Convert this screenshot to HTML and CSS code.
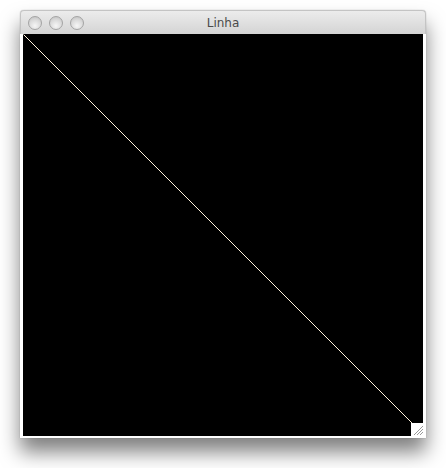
FILE: index.html
```html
<!DOCTYPE html>
<html>
<head>
<meta charset="utf-8">
<link rel="stylesheet" href="styles.css">
</head>
<body>
<div class="window">
  <div class="titlebar">
    <div class="lights">
      <span class="light"></span>
      <span class="light"></span>
      <span class="light"></span>
    </div>
    <div class="title">Linha</div>
  </div>
  <div class="content">
    <svg class="canvas" width="400" height="402" viewBox="0 0 400 402">
      <rect x="0" y="0" width="400" height="402" fill="#000"/>
      <line x1="0.5" y1="0.5" x2="400.5" y2="400.5" stroke="#fff3dc" stroke-width="1"/>
    </svg>
    <div class="grip">
      <svg width="13" height="13" viewBox="0 0 13 13">
        <line x1="3" y1="12" x2="12" y2="3" stroke="#9a9a9a" stroke-width="1"/>
        <line x1="6" y1="12" x2="12" y2="6" stroke="#9a9a9a" stroke-width="1"/>
        <line x1="9" y1="12" x2="12" y2="9" stroke="#9a9a9a" stroke-width="1"/>
      </svg>
    </div>
  </div>
</div>
</body>
</html>
```

FILE: styles.css
```css
html, body {
  margin: 0;
  padding: 0;
  background: #ffffff;
}
body {
  padding: 10px 0 0 20px;
  min-height: 468px;
  box-sizing: border-box;
  overflow: hidden;
}
.window {
  width: 406px;
  background: #fafafa;
  border-radius: 4px 4px 0 0;
  box-shadow: 0 14px 20px rgba(0, 0, 0, 0.5), 0 0 1px rgba(0, 0, 0, 0.4);
  display: flex;
  flex-direction: column;
}
.titlebar {
  height: 24px;
  border-radius: 4px 4px 0 0;
  background: linear-gradient(#ececec, #d4d4d4);
  border: 1px solid #c4c4c4;
  border-bottom: none;
  box-sizing: border-box;
  display: flex;
  align-items: center;
  position: relative;
}
.lights {
  display: flex;
  gap: 7px;
  padding-left: 7px;
}
.light {
  width: 14px;
  height: 14px;
  border-radius: 50%;
  background: radial-gradient(circle at 50% 72%, #f6f6f6 0%, #dadada 55%, #bcbcbc 100%);
  border: 1px solid #a4a4a4;
  box-sizing: border-box;
}
.title {
  position: absolute;
  left: 0;
  right: 0;
  top: 0;
  bottom: 0;
  display: flex;
  align-items: center;
  justify-content: center;
  font-family: "DejaVu Sans", sans-serif;
  font-size: 12px;
  color: #4a4a4a;
  pointer-events: none;
}
.content {
  background: #fff;
  padding: 0 3px 2px 3px;
  position: relative;
}
.canvas {
  display: block;
}
.grip {
  position: absolute;
  right: 2px;
  bottom: 2px;
  width: 13px;
  height: 13px;
  background: #fff;
  display: flex;
}
.grip svg {
  display: block;
}
```
